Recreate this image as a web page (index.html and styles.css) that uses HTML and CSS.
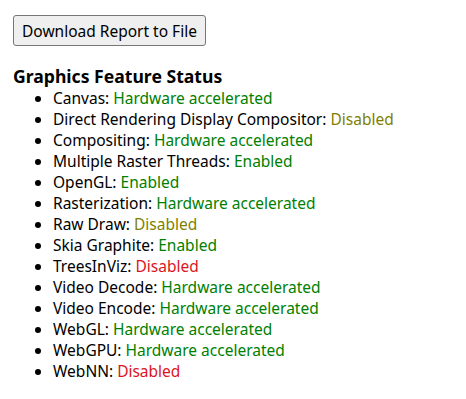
FILE: index.html
```html
<!DOCTYPE html>
<html lang="en">
<head>
<meta charset="UTF-8" />
<title>GPU</title>
<link rel="stylesheet" href="styles.css">
</head>
<body>
<button class="download">Download Report to File</button>

<h3>Graphics Feature Status</h3>
<ul class="feature-list">
  <li>Canvas: <span class="feature-green">Hardware accelerated</span></li>
  <li>Direct Rendering Display Compositor: <span class="feature-yellow">Disabled</span></li>
  <li>Compositing: <span class="feature-green">Hardware accelerated</span></li>
  <li>Multiple Raster Threads: <span class="feature-green">Enabled</span></li>
  <li>OpenGL: <span class="feature-green">Enabled</span></li>
  <li>Rasterization: <span class="feature-green">Hardware accelerated</span></li>
  <li>Raw Draw: <span class="feature-yellow">Disabled</span></li>
  <li>Skia Graphite: <span class="feature-green">Enabled</span></li>
  <li>TreesInViz: <span class="feature-red">Disabled</span></li>
  <li>Video Decode: <span class="feature-green">Hardware accelerated</span></li>
  <li>Video Encode: <span class="feature-green">Hardware accelerated</span></li>
  <li>WebGL: <span class="feature-green">Hardware accelerated</span></li>
  <li>WebGPU: <span class="feature-green">Hardware accelerated</span></li>
  <li>WebNN: <span class="feature-red">Disabled</span></li>
</ul>
</body>
</html>
```
FILE: styles.css
```css
body {
  margin: 0;
  padding: 15px 13px;
  font-family: "Noto Sans", sans-serif;
  font-size: 15.5px;
  color: #000;
  background: #fff;
}

.download {
  font-family: inherit;
  font-size: 15.5px;
  height: 31px;
  padding: 0 8px;
  background: #efefef;
  border: 1px solid #767676;
  border-radius: 3px;
  color: #000;
}

h3 {
  font-size: 17.6px;
  font-weight: bold;
  margin: 19px 0 0;
  line-height: 23px;
}

.feature-list {
  margin: 0;
  padding-left: 40px;
  line-height: 21px;
}

.feature-green {
  color: rgb(0, 128, 0);
}

.feature-yellow {
  color: rgb(128, 128, 0);
}

.feature-red {
  color: rgb(220, 20, 30);
}
```
